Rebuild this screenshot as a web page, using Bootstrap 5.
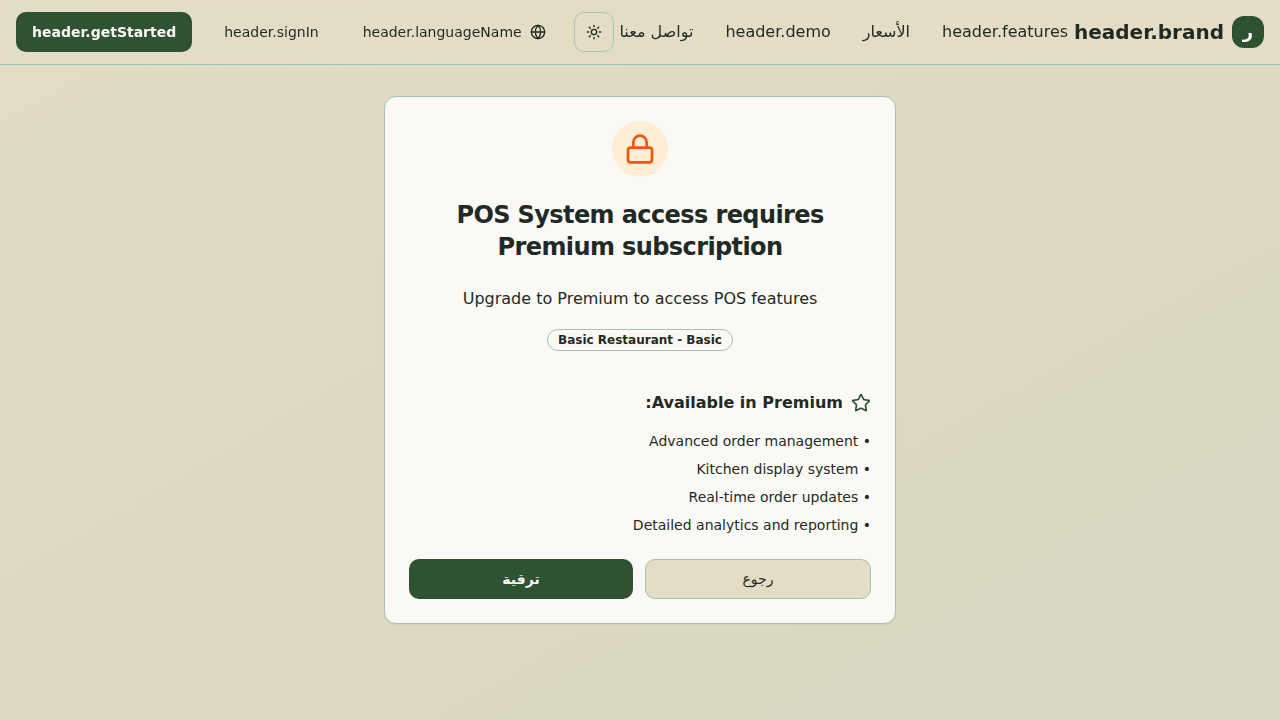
<!DOCTYPE html>
<html lang="ar" dir="rtl">
<head>
<meta charset="utf-8">
<meta name="viewport" content="width=device-width, initial-scale=1">
<title>header.brand</title>
<link href="https://cdn.jsdelivr.net/npm/bootstrap@5.3.0/dist/css/bootstrap.min.css" rel="stylesheet">
<style>
  :root { --ink: #1f2a24; --forest: #2f5232; --sand: #e4dcc5; --line: #a3c4b0; --paper: #fbf9f5; }
  body { font-family: "DejaVu Sans", sans-serif; color: var(--ink); background: linear-gradient(to bottom right, #e4dcc5, #d8d7c1); min-height: 100vh; }
  .site-header { background: rgba(228, 220, 197, .95); backdrop-filter: blur(8px); border-bottom: 1px solid #9cc3b1; }
  .header-row { height: 64px; }
  .logo-tile { width: 32px; height: 32px; border-radius: 12px; background: var(--forest); color: #fff; font-size: 18px; line-height: 28px; }
  .brand-name { font-size: 20px; line-height: 28px; }
  .main-links { gap: 32px; }
  .main-links .nav-link { color: var(--ink); padding: 0; line-height: 24px; }
  .btn { --bs-btn-border-radius: 10px; --bs-btn-font-size: 14px; --bs-btn-line-height: 20px; --bs-btn-color: var(--ink); --bs-btn-border-width: 0; --bs-btn-padding-x: 16px; --bs-btn-padding-y: 8px; height: 40px; display: inline-flex; align-items: center; justify-content: center; }
  .btn-forest { --bs-btn-bg: var(--forest); --bs-btn-color: var(--paper); --bs-btn-hover-bg: #264529; --bs-btn-hover-color: #fff; font-weight: 700; }
  .btn-sand { --bs-btn-bg: var(--sand); --bs-btn-border-width: 1px; --bs-btn-border-color: var(--line); --bs-btn-hover-border-color: var(--line); }
  .btn-theme { width: 40px; --bs-btn-padding-x: 0; --bs-btn-border-width: 1px; --bs-btn-border-color: #a3c8b6; }
  .btn-language { --bs-btn-padding-x: 12px; }
  .upgrade-card { width: 512px; margin-top: 31px; border-radius: 12px; border: 1px solid var(--line); background: var(--paper); color: var(--ink); padding: 24px; box-shadow: 0 1px 2px rgba(0, 0, 0, .05); }
  .lock-disc { width: 56px; height: 56px; background: #ffedd5; color: #ea580c; }
  .card-heading { font-size: 24px; line-height: 32px; letter-spacing: -.6px; margin: 22px 0 24px; }
  .plan-pill { font-size: 12px; line-height: 16px; padding: 2px 10px; border: 1px solid var(--line); margin-top: 18px; }
  .premium-title { font-size: 16px; line-height: 24px; margin: 40px 0 16px; }
  .premium-title svg { color: var(--forest); }
  .perk-list { font-size: 14px; line-height: 20px; }
  .card-actions { gap: 12px; }
  .card-actions .btn { flex: 1 1 0; }
  svg { fill: none; stroke: currentColor; stroke-width: 2; stroke-linecap: round; stroke-linejoin: round; flex-shrink: 0; }
</style>
</head>
<body>
<header class="site-header">
  <div class="header-row d-flex align-items-center justify-content-between px-3">
    <a class="d-flex align-items-center gap-2 text-reset text-decoration-none" href="#">
      <span class="logo-tile d-flex align-items-center justify-content-center fw-bold">ر</span>
      <span class="brand-name fw-bold">header.brand</span>
    </a>
    <nav class="main-links d-flex">
      <a class="nav-link" href="#">header.features</a>
      <a class="nav-link" href="#">الأسعار</a>
      <a class="nav-link" href="#">header.demo</a>
      <a class="nav-link" href="#">تواصل معنا</a>
    </nav>
    <div class="d-flex align-items-center gap-3">
      <button class="btn btn-theme" type="button" aria-label="theme">
        <svg width="16" height="16" viewBox="0 0 24 24"><circle cx="12" cy="12" r="4"/><path d="M12 2v2M12 20v2M4.93 4.93l1.41 1.41M17.66 17.66l1.41 1.41M2 12h2M20 12h2M6.34 17.66l-1.41 1.41M19.07 4.93l-1.41 1.41"/></svg>
      </button>
      <button class="btn btn-language gap-2" type="button">
        <svg width="16" height="16" viewBox="0 0 24 24"><circle cx="12" cy="12" r="10"/><path d="M12 2a14.5 14.5 0 0 0 0 20 14.5 14.5 0 0 0 0-20M2 12h20"/></svg>
        <span>header.languageName</span>
      </button>
      <a class="btn" href="#">header.signIn</a>
      <a class="btn btn-forest" href="#">header.getStarted</a>
    </div>
  </div>
</header>
<main class="d-flex justify-content-center">
  <section class="upgrade-card">
    <div class="text-center">
      <div class="lock-disc rounded-circle d-flex align-items-center justify-content-center mx-auto">
        <svg width="32" height="32" viewBox="0 0 24 24"><rect width="18" height="11" x="3" y="11" rx="2" ry="2"/><path d="M7 11V7a5 5 0 0 1 10 0v4"/></svg>
      </div>
      <h1 class="card-heading fw-bold">POS System access requires Premium subscription</h1>
      <p class="mb-0">Upgrade to Premium to access POS features</p>
      <div class="d-flex justify-content-center"><span class="plan-pill rounded-pill fw-bold">Basic Restaurant - Basic</span></div>
    </div>
    <h2 class="premium-title fw-bold d-flex align-items-center gap-2">
      <svg width="20" height="20" viewBox="0 0 24 24"><path d="M11.525 2.295a.53.53 0 0 1 .95 0l2.31 4.679a2.123 2.123 0 0 0 1.595 1.16l5.166.756a.53.53 0 0 1 .294.904l-3.736 3.638a2.123 2.123 0 0 0-.611 1.878l.882 5.14a.53.53 0 0 1-.771.56l-4.618-2.428a2.122 2.122 0 0 0-1.973 0L6.396 21.01a.53.53 0 0 1-.77-.56l.881-5.139a2.122 2.122 0 0 0-.611-1.879L2.16 9.795a.53.53 0 0 1 .294-.906l5.165-.755a2.122 2.122 0 0 0 1.597-1.16z"/></svg>
      <span>Available in Premium:</span>
    </h2>
    <ul class="perk-list list-unstyled d-flex flex-column gap-2 p-0 mb-4">
      <li>• Advanced order management</li>
      <li>• Kitchen display system</li>
      <li>• Real-time order updates</li>
      <li>• Detailed analytics and reporting</li>
    </ul>
    <div class="card-actions d-flex">
      <button class="btn btn-sand" type="button">رجوع</button>
      <button class="btn btn-forest" type="button">ترقية</button>
    </div>
  </section>
</main>
<script src="https://cdn.jsdelivr.net/npm/bootstrap@5.3.0/dist/js/bootstrap.bundle.min.js"></script>
</body>
</html>
